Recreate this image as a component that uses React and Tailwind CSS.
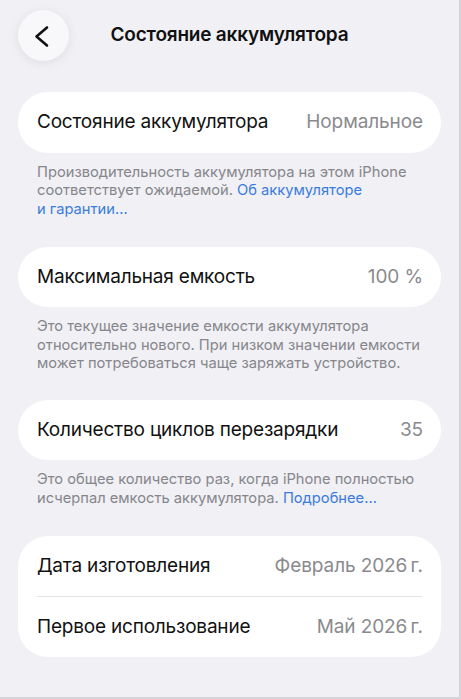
const font = { fontFamily: "Inter, 'Noto Sans', 'Liberation Sans', sans-serif" };

function Row({ label, value, h = "h-[60px]" }) {
  return (
    <div className={`flex ${h} items-center justify-between pl-[19px] pr-[18px]`}>
      <span className="text-[19px] tracking-[-0.2px] text-[#111]">{label}</span>
      <span className="text-[19px] tracking-[-0.1px] text-[#8a8a8e]">{value}</span>
    </div>
  );
}

function Card({ children }) {
  return <div className="mx-[18px] rounded-[30px] bg-white">{children}</div>;
}

function Footer({ children, className = "" }) {
  return (
    <p className={`px-[37px] text-[14.7px] leading-[18.4px] text-[#86868b] whitespace-nowrap ${className}`}>
      {children}
    </p>
  );
}

const Link = ({ children }) => <span className="text-[#3a7cdc]">{children}</span>;

export default function App() {
  return (
    <div
      className="h-[699px] w-[461px] overflow-hidden border-r-2 border-b-2 border-[#d6d6da] bg-[#f0f0f5]"
      style={font}
    >
      {/* Nav bar */}
      <div className="flex items-center pt-[10px]">
        <div className="w-[69px] pl-[18px]">
          <button className="flex h-[51px] w-[51px] items-center justify-center rounded-full bg-[#f8f8fa] shadow-[0_2px_12px_rgba(0,0,0,0.08)]">
            <svg width="51" height="51" viewBox="0 0 51 51" fill="none">
              <path
                d="M29 17.5L18.5 26.5L29 35.5"
                stroke="#111"
                strokeWidth="2.6"
                strokeLinecap="round"
                strokeLinejoin="round"
              />
            </svg>
          </button>
        </div>
        <h1 className="flex-1 text-center text-[19px] font-semibold tracking-[-0.2px] text-[#111]">
          Состояние аккумулятора
        </h1>
        <div className="w-[69px]" />
      </div>

      <div className="mt-[31px]">
        <Card>
          <Row label="Состояние аккумулятора" value="Нормальное" h="h-[61px]" />
        </Card>
        <Footer className="mt-[10px]">
          Производительность аккумулятора на этом iPhone
          <br />
          соответствует ожидаемой. <Link>Об аккумуляторе</Link>
          <br />
          <Link>и гарантии…</Link>
        </Footer>
      </div>

      <div className="mt-[29px]">
        <Card>
          <Row label="Максимальная емкость" value="100 %" />
        </Card>
        <Footer className="mt-[10px]">
          Это текущее значение емкости аккумулятора
          <br />
          относительно нового. При низком значении емкости
          <br />
          может потребоваться чаще заряжать устройство.
        </Footer>
      </div>

      <div className="mt-[28px]">
        <Card>
          <Row label="Количество циклов перезарядки" value="35" />
        </Card>
        <Footer className="mt-[10px]">
          Это общее количество раз, когда iPhone полностью
          <br />
          исчерпал емкость аккумулятора. <Link>Подробнее…</Link>
        </Footer>
      </div>

      <div className="mt-[29px]">
        <Card>
          <Row label="Дата изготовления" value={"Февраль 2026\u2009г."} />
          <div className="mx-[19px] h-px bg-[#e3e3e7]" />
          <Row label="Первое использование" value={"Май 2026\u2009г."} />
        </Card>
      </div>
    </div>
  );
}
